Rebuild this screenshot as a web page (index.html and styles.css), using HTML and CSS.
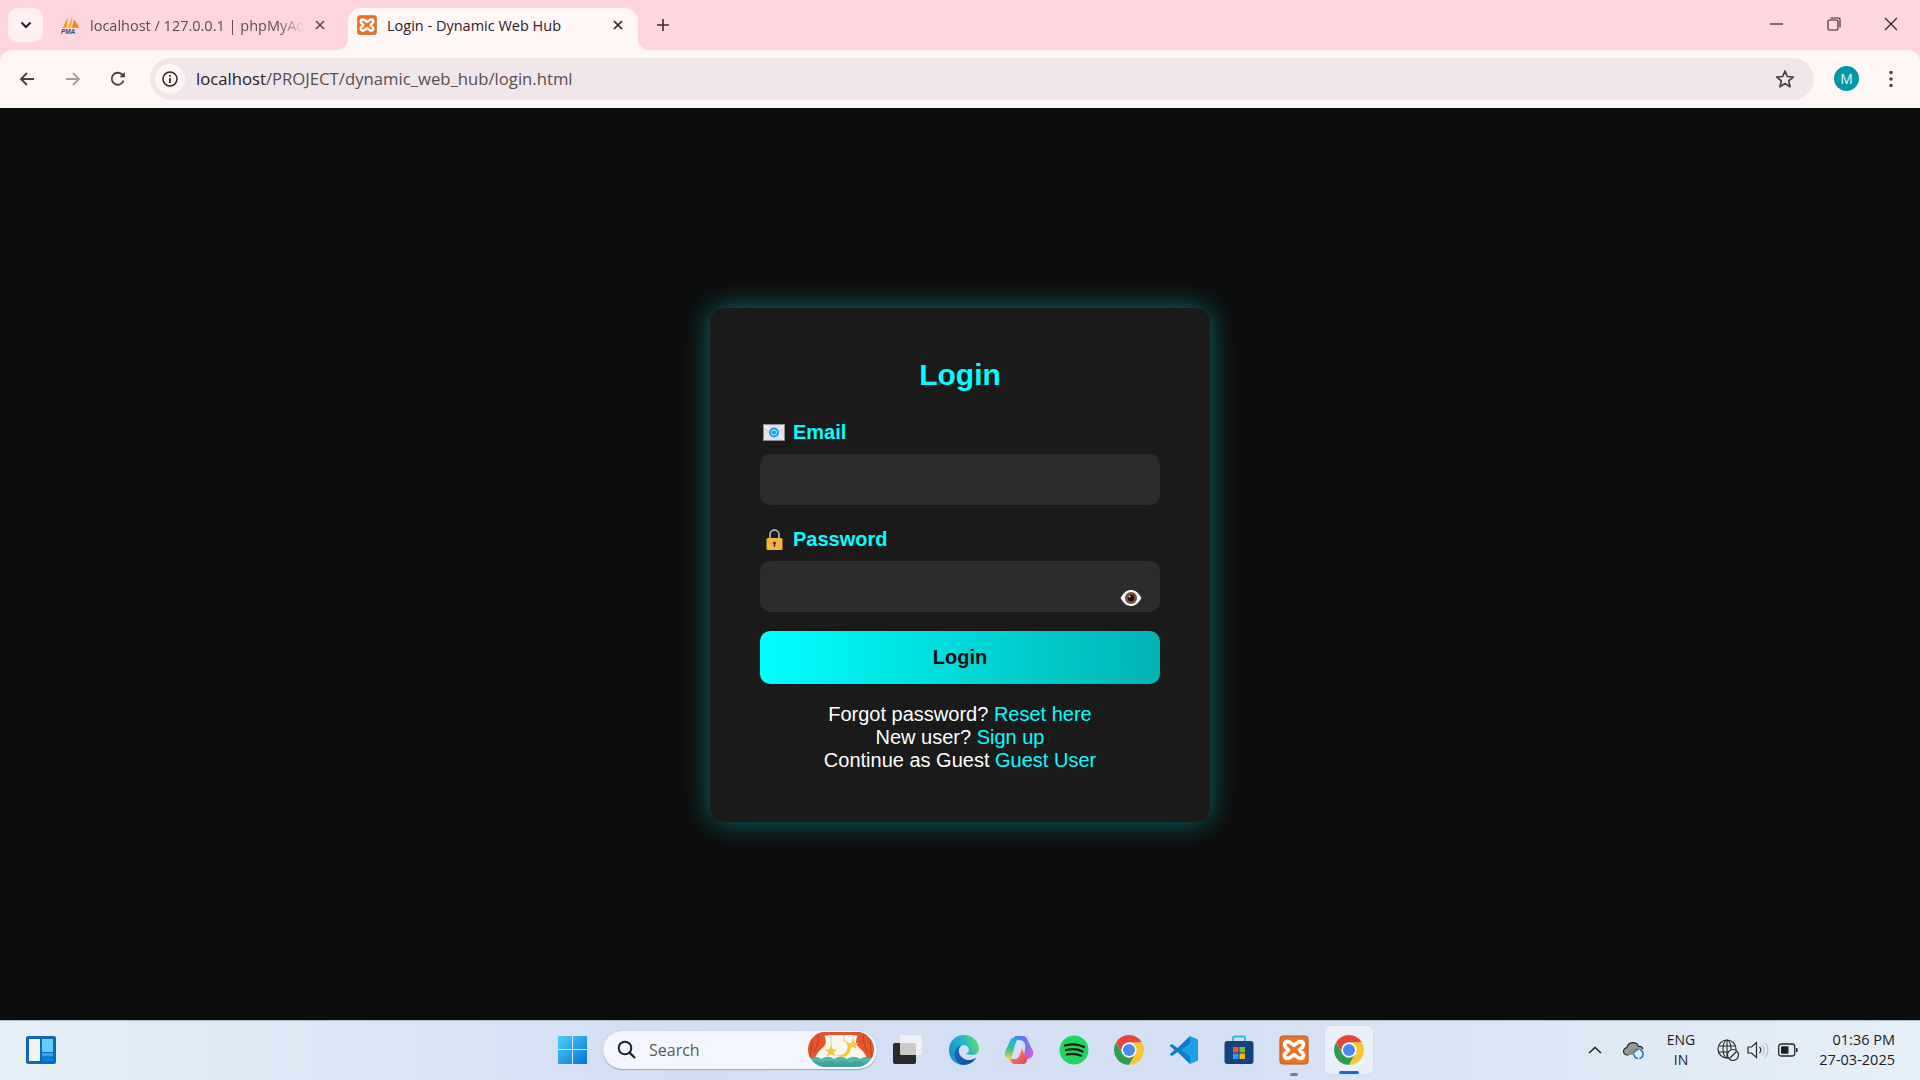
FILE: index.html
```html
<!DOCTYPE html>
<html lang="en">
<head>
    <meta charset="UTF-8">
    <meta name="viewport" content="width=device-width, initial-scale=1.0">
    <title>Login - Dynamic Web Hub</title>
    <link rel="stylesheet" href="styles.css">
</head>
<body>
    <!-- shared icons -->
    <svg class="sprite" aria-hidden="true">
        <symbol id="chrome" viewBox="4 4 40 40">
            <path fill="#e8463a" d="M24 4A20 20 0 0 1 41.32 14H24A10 10 0 0 0 15.34 29L6.68 14A20 20 0 0 1 24 4z"/>
            <path fill="#2f9e52" d="M6.68 14A20 20 0 0 0 24 44L32.66 29A10 10 0 0 1 15.34 29z"/>
            <path fill="#fcc52f" d="M41.32 14H24A10 10 0 0 1 32.66 29L24 44A20 20 0 0 0 41.32 14z"/>
            <circle cx="24" cy="24" r="10" fill="#fff"/>
            <circle cx="24" cy="24" r="8" fill="#4a8af4"/>
        </symbol>
        <symbol id="xampp" viewBox="0 0 32 32">
            <rect x="1" y="1" width="30" height="30" rx="3" fill="#e8742a"/>
            <rect x="1" y="1" width="30" height="30" rx="3" fill="none" stroke="#b9561c"/>
            <path fill="none" stroke="#fff" stroke-width="4" stroke-linejoin="round" d="M9 7C6 7 5 10 7 13L10 16L7 19C5 22 6 25 9 25C12 25 13 23 16 21C19 23 20 25 23 25C26 25 27 22 25 19L22 16L25 13C27 10 26 7 23 7C20 7 19 9 16 11C13 9 12 7 9 7z"/>
        </symbol>
    </svg>

    <div class="tabstrip">
        <button class="tab-search">
            <svg width="12" height="8" viewBox="0 0 12 8"><path d="M1.500 1.500L6 6L10.500 1.500" fill="none" stroke="#2d2024" stroke-width="2"/></svg>
        </button>
        <div class="tab">
            <svg class="favicon" viewBox="0 0 22 20">
                <path fill="#f29a1f" d="M3 13C5 9 7 5 8 1C8.500 5 8 10 7 13z"/>
                <path fill="#f7b23b" d="M8 13C10 9 12 5 13 0C14 5 13 10 12 13z"/>
                <path fill="#e8871a" d="M13 13C14 9 15 7 15 4C18 7 20 10 21 13z"/>
                <text x="1" y="19.500" class="pma">PMA</text>
            </svg>
            <span class="tab-title">localhost / 127.0.0.1 | phpMyAdmin</span>
            <svg class="tab-close" viewBox="0 0 12 12"><path d="M2 2L10 10M10 2L2 10" stroke="#5b4d50" stroke-width="1.700"/></svg>
        </div>
        <div class="tab active">
            <svg class="favicon"><use href="#xampp"/></svg>
            <span class="tab-title">Login - Dynamic Web Hub</span>
            <svg class="tab-close" viewBox="0 0 12 12"><path d="M2 2L10 10M10 2L2 10" stroke="#2d2024" stroke-width="1.700"/></svg>
        </div>
        <svg class="new-tab" viewBox="0 0 14 14"><path d="M7 1V13M1 7H13" stroke="#3a2d30" stroke-width="1.600"/></svg>
        <div class="window-controls">
            <svg width="14" height="14" viewBox="0 0 14 14"><path d="M0 7H13" stroke="#2b2124" stroke-width="1.200"/></svg>
            <svg width="14" height="14" viewBox="0 0 14 14"><rect x="1" y="3" width="10" height="10" rx="1.500" fill="none" stroke="#2b2124" stroke-width="1.100"/><path d="M3.500 1H11.500A1.500 1.500 0 0 1 13 2.500V10.500" fill="none" stroke="#2b2124" stroke-width="1.100"/></svg>
            <svg width="14" height="14" viewBox="0 0 14 14"><path d="M1 1L13 13M13 1L1 13" stroke="#2b2124" stroke-width="1.200"/></svg>
        </div>
    </div>

    <div class="toolbar">
        <svg class="nav-icon" viewBox="0 0 16 16"><path d="M15 8H2M8 2L2 8L8 14" fill="none" stroke="#4a3c3f" stroke-width="1.800"/></svg>
        <svg class="nav-icon nav-forward" viewBox="0 0 16 16"><path d="M1 8H14M8 2L14 8L8 14" fill="none" stroke="#a89c9f" stroke-width="1.800"/></svg>
        <svg class="nav-icon nav-reload" viewBox="0 0 16 16"><path d="M13.500 9.500A6 6 0 1 1 12 3.500L14 5.500" fill="none" stroke="#4a3c3f" stroke-width="1.800"/><path d="M14.800 1V6.300H9.500z" fill="#4a3c3f"/></svg>
        <div class="omnibox">
            <span class="site-info">
                <svg width="16" height="16" viewBox="0 0 16 16"><circle cx="8" cy="8" r="7" fill="none" stroke="#2d2024" stroke-width="1.500"/><path d="M8 7V12M8 4V5.800" stroke="#2d2024" stroke-width="1.700"/></svg>
            </span>
            <span class="url">localhost<span class="url-path">/PROJECT/dynamic_web_hub/login.html</span></span>
            <svg class="star" viewBox="0 0 20 20"><path d="M10 2L12.300 7.500L18.200 8L13.700 11.900L15.100 17.700L10 14.600L4.900 17.700L6.300 11.900L1.800 8L7.700 7.500z" fill="none" stroke="#4a3c3f" stroke-width="1.700" stroke-linejoin="round"/></svg>
        </div>
        <span class="avatar">M</span>
        <svg class="menu-dots" viewBox="0 0 4 18"><circle cx="2" cy="2.500" r="1.800"/><circle cx="2" cy="9" r="1.800"/><circle cx="2" cy="15.500" r="1.800"/></svg>
    </div>

    <main class="page">
        <form class="card">
            <h2 class="card-title">Login</h2>

            <label class="field-label">
                <span class="label-icon">
                    <svg width="22" height="17" viewBox="0 0 22 17">
                        <rect x="0.500" y="0.500" width="21" height="16" fill="#e4deea" stroke="#8f8b99"/>
                        <path d="M1 1L11 8.500L21 1M1 16L8 7M21 16L14 7" fill="none" stroke="#fff" stroke-width="0.800"/>
                        <circle cx="11" cy="8.500" r="5" fill="#16a2e8"/>
                        <circle cx="11" cy="8.500" r="2.600" fill="none" stroke="#bfe8fb" stroke-width="1"/>
                    </svg>
                </span>
                Email
            </label>
            <input class="text-input" type="email">

            <label class="field-label field-label-next">
                <span class="label-icon">
                    <svg width="17" height="21" viewBox="0 0 17 21">
                        <path d="M4 10V5.500A4.500 4.500 0 0 1 13 5.500V10" fill="none" stroke="#a9a9ad" stroke-width="1.800"/>
                        <rect x="0.500" y="9" width="16" height="12" rx="1.500" fill="#f9b233"/>
                        <circle cx="8.500" cy="14" r="1.600" fill="#3a3560"/>
                        <path d="M7.800 14H9.200V18H7.800z" fill="#3a3560"/>
                    </svg>
                </span>
                Password
            </label>
            <div class="password-wrap">
                <input class="text-input" type="password">
                <svg class="eye" viewBox="0 0 22 18">
                    <path d="M0.500 9C4 3 7 1 11 1S18 3 21.500 9C18 15 15 17 11 17S4 15 0.500 9z" fill="#f4f4f4"/>
                    <circle cx="11" cy="9" r="6" fill="#7d4a34"/>
                    <circle cx="11" cy="9" r="3.200" fill="#15110f"/>
                    <circle cx="9.500" cy="7.500" r="1" fill="#eee"/>
                </svg>
            </div>

            <button class="login-btn" type="button">Login</button>

            <div class="links">
                <p>Forgot password? <a href="#">Reset here</a></p>
                <p>New user? <a href="#">Sign up</a></p>
                <p>Continue as Guest <a href="#">Guest User</a></p>
            </div>
        </form>
    </main>

    <footer class="taskbar">
        <svg class="widgets" viewBox="0 0 30 28">
            <rect width="30" height="28" rx="2" fill="#0f67b8"/>
            <rect x="3" y="3" width="11" height="22" fill="#f2f3f5"/>
            <rect x="16" y="3" width="11" height="13" fill="#62d0ff"/>
            <rect x="16" y="17" width="11" height="3.500" fill="#2fa6f2"/>
            <rect x="16" y="21.500" width="11" height="3.500" fill="#0a84e8"/>
        </svg>

        <div class="task-center">
            <span class="task-item task-start">
                <svg class="task-icon" viewBox="0 0 30 30">
                    <defs><linearGradient id="winBlue" x1="0" y1="0" x2="1" y2="1"><stop offset="0" stop-color="#4fd0fb"/><stop offset="1" stop-color="#0672d0"/></linearGradient></defs>
                    <path fill="url(#winBlue)" d="M0 1H14V14H0zM15 1H29V14H15zM0 15H14V29H0zM15 15H29V29H15z"/>
                </svg>
            </span>
            <div class="search-box">
                <svg width="20" height="20" viewBox="0 0 20 20"><circle cx="8" cy="8" r="6.300" fill="none" stroke="#222" stroke-width="2"/><path d="M12.600 12.600L18 18" stroke="#222" stroke-width="2.200"/></svg>
                <span class="search-text">Search</span>
                <svg class="search-art" viewBox="0 0 66 35">
                    <defs><clipPath id="artClip"><rect width="66" height="35" rx="17.500"/></clipPath></defs>
                    <g clip-path="url(#artClip)">
                        <rect width="66" height="35" fill="#fbf7ee"/>
                        <path fill="#52b8ad" d="M0 27C5 24 9 24 13 27C18 24 22 24 26 27C31 24 35 24 39 27C44 24 48 24 52 27C57 24 61 24 66 27V35H0z"/>
                        <path fill="#2f8f8c" d="M0 31C6 28 10 28 14 31C20 28 24 28 28 31C34 28 38 28 42 31C48 28 52 28 56 31C60 29 63 29 66 31V35H0z" opacity="0.500"/>
                        <path fill="#e5552c" d="M0 0H66V3C60 5 52 4 44 3H22C14 4 6 5 0 3z"/>
                        <path fill="#e5552c" d="M0 0H16C17 6 19 10 17 13C14 17 9 20 7 26H0z"/>
                        <path fill="#e5552c" d="M66 0H50C49 6 47 10 49 13C52 17 57 20 59 26H66z"/>
                        <path d="M4 2C4 10 3 18 2 25M10 2C11 8 10 14 6 20M62 2C62 10 63 18 64 25M56 2C55 8 56 14 60 20" fill="none" stroke="#bb3a1d" stroke-width="0.900"/>
                        <path d="M23 3V14M36 3V9M45 3V8" stroke="#c9b89a" stroke-width="0.700"/>
                        <path fill="#f6c538" d="M23 13L24.800 17.500H29L25.700 20.200L27 24.500L23 22L19 24.500L20.300 20.200L17 17.500H21.200zM45 7L46.600 11H50.500L47.400 13.400L48.500 17L45 15L41.500 17L42.600 13.400L39.500 11H43.400z"/>
                        <path fill="#f6c538" d="M35 8A8.500 8.500 0 1 1 28 22.500A7 7 0 0 0 35 8z"/>
                    </g>
                </svg>
            </div>
            <span class="task-item">
                <svg class="task-icon" viewBox="0 0 30 30">
                    <rect x="0" y="8" width="23" height="21" rx="2" fill="#2a2a2a"/>
                    <rect x="7" y="0" width="22" height="20" rx="1.500" fill="#f3f3f3" opacity="0.800"/>
                </svg>
            </span>
            <span class="task-item task-edge">
                <svg class="task-icon" viewBox="0 0 30 30">
                    <defs>
                        <linearGradient id="edgeTop" x1="0" y1="0.700" x2="1" y2="0.300"><stop offset="0" stop-color="#1290d8"/><stop offset="0.550" stop-color="#1fb5c8"/><stop offset="1" stop-color="#62dc6a"/></linearGradient>
                        <linearGradient id="edgeLow" x1="0" y1="0" x2="1" y2="1"><stop offset="0" stop-color="#1670c0"/><stop offset="1" stop-color="#0c4f9c"/></linearGradient>
                    </defs>
                    <path fill="url(#edgeTop)" d="M15 0C23 0 30 6 30 14C30 18 27 20 23 20C20 20 17.500 19 16.500 18.500C19 18 20 16.500 20 15C20 12 17 10 14 10C8 10 5 14 5 19C5 24 8 28 13 30C5 29 0 23 0 15C0 6 7 0 15 0z"/>
                    <path fill="url(#edgeLow)" d="M13 30C8 28 5 24 5 19C5 14 8 10 14 10C11 11 9.500 14 10 17.500C11 22 16 25.500 21 25C24 24.700 26 23.500 27.500 22.500C25 27 20 30 15 30z"/>
                </svg>
            </span>
            <span class="task-item">
                <svg class="task-icon" viewBox="0 0 30 30">
                    <defs>
                        <linearGradient id="copA" x1="0.300" y1="0" x2="0.300" y2="1"><stop offset="0" stop-color="#2aa8e8"/><stop offset="0.550" stop-color="#3ec28a"/><stop offset="1" stop-color="#f7d038"/></linearGradient>
                        <linearGradient id="copB" x1="0" y1="0" x2="1" y2="1"><stop offset="0" stop-color="#3a7df0"/><stop offset="0.600" stop-color="#8a6ef0"/><stop offset="1" stop-color="#e85cc8"/></linearGradient>
                        <linearGradient id="copC" x1="0" y1="0" x2="1" y2="1"><stop offset="0" stop-color="#f7a03a"/><stop offset="1" stop-color="#f0386c"/></linearGradient>
                    </defs>
                    <path fill="url(#copB)" d="M10 2C11 1 12 1 13 1H19C22 1 23 3 24 6L29 16C30 20 28 24 23 24H18C20 20 22 14 21 9C20 6 18 5 15 5H9z"/>
                    <path fill="url(#copC)" d="M20 29H11C8 29 7 27 6 24H11C14 24 15 22 16 19L18 13C19 16 20 19 22 21C24 24 23 28 20 29z"/>
                    <path fill="url(#copA)" d="M9 3H16C13 4 12 7 11 10L7 24C3 24 0 21 1 17L5 8C6 5 7 3 9 3z"/>
                </svg>
            </span>
            <span class="task-item">
                <svg class="task-icon" viewBox="0 0 30 30">
                    <circle cx="15" cy="15" r="14.500" fill="#1ed760"/>
                    <path d="M6 10.500C12 9 19 9 25 12M7 15C12 13.800 18.500 14 23.500 16.500M8 19.500C12 18.500 17.500 18.800 22 20.800" fill="none" stroke="#1a1a1a" stroke-width="2.300" stroke-linecap="round"/>
                </svg>
            </span>
            <span class="task-item"><svg class="task-icon"><use href="#chrome"/></svg></span>
            <span class="task-item">
                <svg class="task-icon" viewBox="0 0 30 30">
                    <path fill="#0a7cc8" d="M21 1L8.500 13L3 9L0.500 10.500L5.500 15L0.500 19.500L3 21L8.500 17L21 29L22 15z"/>
                    <path fill="#1f9fe8" d="M21 1L29 4.500V25.500L21 29zM21 8.500L12 15L21 21.500z"/>
                </svg>
            </span>
            <span class="task-item">
                <svg class="task-icon" viewBox="0 0 30 30">
                    <path d="M9 7V3.500A2 2 0 0 1 11 1.500H19A2 2 0 0 1 21 3.500V7" fill="none" stroke="#2eb6ee" stroke-width="2"/>
                    <rect x="0.500" y="6" width="29" height="23" rx="3" fill="#14427e"/>
                    <rect x="9" y="12" width="5.500" height="5.500" fill="#f05033"/>
                    <rect x="15.500" y="12" width="5.500" height="5.500" fill="#7fbb2a"/>
                    <rect x="9" y="18.500" width="5.500" height="5.500" fill="#18a3ea"/>
                    <rect x="15.500" y="18.500" width="5.500" height="5.500" fill="#fdb912"/>
                </svg>
            </span>
            <span class="task-item task-open"><svg class="task-icon"><use href="#xampp"/></svg></span>
            <span class="task-item task-active"><svg class="task-icon"><use href="#chrome"/></svg></span>
        </div>

        <div class="tray">
            <svg class="tray-chevron" viewBox="0 0 14 8"><path d="M1 7L7 1.500L13 7" fill="none" stroke="#1c1c1c" stroke-width="1.500"/></svg>
            <svg class="tray-cloud" viewBox="0 0 22 20">
                <path d="M6 15H4.500A3.700 3.700 0 0 1 4 7.600A6 6 0 0 1 15.500 6.500A4 4 0 0 1 20 9" fill="#9a9a9a" stroke="#2a2a2a" stroke-width="1.200"/>
                <path d="M5 15C4 12 7 8 13 8C14 8 15 9 15 9L10 15z" fill="#8d8d8d"/>
                <circle cx="15.500" cy="14" r="4.500" fill="#e4eef7" stroke="#1c74c8" stroke-width="1.600" stroke-dasharray="6 1.500"/>
            </svg>
            <div class="tray-lang"><span>ENG</span><span>IN</span></div>
            <svg class="tray-globe" viewBox="0 0 22 22">
                <circle cx="10" cy="10" r="9" fill="none" stroke="#2a2a2a" stroke-width="1.200"/>
                <ellipse cx="10" cy="10" rx="4" ry="9" fill="none" stroke="#2a2a2a" stroke-width="1.100"/>
                <path d="M1.500 7H18.500M1.500 13H12M10 1V19" stroke="#2a2a2a" stroke-width="1.100"/>
                <circle cx="16" cy="16" r="5.500" fill="#e4eef7" stroke="#2a2a2a" stroke-width="1.200"/>
                <path d="M12.500 19.500L19.500 12.500" stroke="#2a2a2a" stroke-width="1.200"/>
            </svg>
            <svg class="tray-sound" viewBox="0 0 22 18">
                <path d="M1 6H4.500L9.500 1.500V16.500L4.500 12H1z" fill="none" stroke="#2a2a2a" stroke-width="1.200"/>
                <path d="M12.500 6A4.500 4.500 0 0 1 12.500 12" fill="none" stroke="#2a2a2a" stroke-width="1.200"/>
                <path d="M15 3.500A8 8 0 0 1 15 14.500M18 1.500A11 11 0 0 1 18 16.500" fill="none" stroke="#b5b9bf" stroke-width="1"/>
            </svg>
            <svg class="tray-battery" viewBox="0 0 20 14">
                <rect x="0.700" y="1" width="16" height="12" rx="2.500" fill="none" stroke="#2a2a2a" stroke-width="1.300"/>
                <rect x="3" y="3.300" width="7.500" height="7.400" rx="1" fill="#1f1f1f"/>
                <path d="M18 5H19.500V9H18z" fill="#1f1f1f"/>
            </svg>
            <div class="tray-clock"><span>01:36 PM</span><span>27-03-2025</span></div>
        </div>
    </footer>
</body>
</html>
```

FILE: styles.css
```css
* {
    box-sizing: border-box;
}

body {
    margin: 0;
    height: 1080px;
    display: flex;
    flex-direction: column;
    overflow: hidden;
    background: #ffd6df;
    font-family: "Open Sans", "Liberation Sans", sans-serif;
    color: #2d2024;
}

.sprite {
    position: absolute;
    width: 0;
    height: 0;
}

/* BROWSER TABS */
.tabstrip {
    height: 50px;
    flex: none;
    display: flex;
    background: #ffd6df;
    position: relative;
}

.tab-search {
    width: 35px;
    height: 34px;
    margin: 8px 0 0 8px;
    padding: 0;
    border: 0;
    border-radius: 10px;
    background: #fff1f3;
    display: flex;
    align-items: center;
    justify-content: center;
}

.tab {
    width: 295px;
    height: 42px;
    margin-top: 8px;
    padding: 0 12px 8px 17px;
    display: flex;
    align-items: center;
    gap: 10px;
    color: #5b4d50;
    font-size: 14.500px;
    position: relative;
}

.tab.active {
    width: 290px;
    margin-left: 10px;
    padding: 0 14px 8px 9px;
    color: #2d2024;
    background: #fff7f5;
    border-radius: 14px 14px 0 0;
}

.tab.active::before,
.tab.active::after {
    content: "";
    position: absolute;
    bottom: 0;
    width: 12px;
    height: 12px;
}

.tab.active::before {
    left: -12px;
    background: radial-gradient(circle at 0 0, transparent 12px, #fff7f5 12.500px);
}

.tab.active::after {
    right: -12px;
    background: radial-gradient(circle at 100% 0, transparent 12px, #fff7f5 12.500px);
}

.favicon {
    width: 20px;
    height: 20px;
    flex: none;
}

.pma {
    font-family: "Liberation Sans", sans-serif;
    font-size: 7px;
    font-weight: bold;
    font-style: italic;
    fill: #2b4a86;
}

.tab-title {
    flex: 1;
    white-space: nowrap;
    overflow: hidden;
    -webkit-mask-image: linear-gradient(90deg, #000 88%, transparent);
    mask-image: linear-gradient(90deg, #000 88%, transparent);
}

.tab.active .tab-title {
    -webkit-mask-image: none;
    mask-image: none;
}

.tab-close {
    width: 12px;
    height: 12px;
    flex: none;
}

.new-tab {
    width: 14px;
    height: 14px;
    margin: 18px 0 0 18px;
}

.window-controls {
    margin-left: auto;
    padding: 17px 22px 0 0;
    display: flex;
    gap: 43px;
    height: 14px;
}

/* TOOLBAR */
.toolbar {
    height: 58px;
    flex: none;
    display: flex;
    align-items: center;
    background: #fff7f5;
    border-radius: 12px 12px 0 0;
    padding-bottom: 1px;
}

.nav-icon {
    width: 16px;
    height: 16px;
    margin-left: 19px;
    flex: none;
}

.nav-forward {
    margin-left: 30px;
}

.nav-reload {
    margin-left: 29px;
}

.omnibox {
    width: 1664px;
    height: 42px;
    margin-left: 24px;
    flex: none;
    display: flex;
    align-items: center;
    border-radius: 21px;
    background: #f1e6ea;
    padding: 0 19px 0 5px;
}

.site-info {
    width: 30px;
    height: 30px;
    border-radius: 50%;
    background: #fff7f5;
    display: flex;
    align-items: center;
    justify-content: center;
    flex: none;
}

.url {
    margin-left: 11px;
    font-size: 16.700px;
    color: #2d2024;
    white-space: nowrap;
}

.url-path {
    color: #5b4d50;
}

.star {
    width: 20px;
    height: 20px;
    margin-left: auto;
}

.avatar {
    width: 25px;
    height: 25px;
    margin-left: 20px;
    border-radius: 50%;
    background: #0097a7;
    color: #e8f6f8;
    font-size: 14px;
    display: flex;
    align-items: center;
    justify-content: center;
    flex: none;
}

.menu-dots {
    width: 4px;
    height: 18px;
    margin-left: 30px;
    fill: #5b3f47;
    flex: none;
}

/* LOGIN CARD */
.page {
    flex: 1;
    display: flex;
    align-items: center;
    justify-content: center;
    padding-top: 2px;
    background: #0d0d0d;
    font-family: "Liberation Sans", Arial, sans-serif;
}

.card {
    width: 500px;
    padding: 50px;
    background: #1a1a1a;
    border-radius: 15px;
    box-shadow: 0 0 28px rgba(0, 255, 255, 0.4);
}

.card-title {
    margin: 0 0 29px;
    font-size: 30px;
    font-weight: bold;
    line-height: 34px;
    text-align: center;
    color: #0ff;
}

.field-label {
    display: flex;
    align-items: center;
    height: 23px;
    margin-bottom: 10px;
    font-size: 20px;
    font-weight: bold;
    color: #0ff;
}

.field-label-next {
    margin-top: 23px;
}

.label-icon {
    width: 28px;
    margin-right: 5px;
    display: flex;
    justify-content: center;
}

.text-input {
    display: block;
    width: 100%;
    height: 51px;
    border: 0;
    border-radius: 10px;
    background: #2c2c2c;
}

.password-wrap {
    position: relative;
}

.eye {
    position: absolute;
    right: 18px;
    top: 28px;
    width: 22px;
    height: 18px;
}

.login-btn {
    display: block;
    width: 100%;
    height: 53px;
    margin-top: 19px;
    border: 0;
    border-radius: 10px;
    background: linear-gradient(90deg, #0ff, #00b3b3);
    color: #111;
    font-family: inherit;
    font-size: 20px;
    font-weight: bold;
}

.links {
    margin-top: 19px;
    font-size: 20px;
    line-height: 23px;
    text-align: center;
    color: #fff;
}

.links p {
    margin: 0;
}

.links a {
    color: #0ff;
    text-decoration: none;
}

/* TASKBAR */
.taskbar {
    height: 60px;
    flex: none;
    display: flex;
    align-items: center;
    padding-bottom: 2px;
    border-top: 1px solid #b4bccb;
    background: linear-gradient(90deg, #e6f0f8, #d3def3 35%, #d6e0f3 65%, #e5f0f8);
    position: relative;
}

.widgets {
    width: 30px;
    height: 28px;
    margin-left: 26px;
    flex: none;
}

.task-center {
    margin-left: 492px;
    display: flex;
    align-items: center;
    gap: 7px;
    flex: none;
}

.task-item {
    width: 48px;
    height: 48px;
    display: flex;
    align-items: center;
    justify-content: center;
    flex: none;
    position: relative;
    border-radius: 5px;
}

.task-start .task-icon {
    margin-left: 2px;
}

.task-edge {
    margin-left: 1px;
}

.task-icon {
    width: 30px;
    height: 30px;
}

.task-open::after,
.task-active::after {
    content: "";
    position: absolute;
    bottom: 0;
    left: 50%;
    transform: translateX(-50%);
    height: 3px;
    border-radius: 2px;
}

.task-open::after {
    width: 8px;
    background: #7b7f88;
    bottom: -2px;
}

.task-active {
    background: #eaf0fa;
    box-shadow: 0 0 1px rgba(0, 0, 0, 0.2);
}

.task-active::after {
    width: 20px;
    background: #0a6fd0;
}

.search-box {
    width: 274px;
    height: 38px;
    padding-left: 14px;
    display: flex;
    align-items: center;
    border-radius: 19px;
    background: #f3f6fe;
    box-shadow: 0 1px 1px rgba(60, 70, 100, 0.35), 0 0 1px rgba(60, 70, 100, 0.3);
    position: relative;
    flex: none;
}

.search-text {
    margin-left: 12px;
    font-size: 16px;
    color: #5a5a5a;
}

.search-art {
    position: absolute;
    right: 3px;
    top: 1px;
    width: 66px;
    height: 35px;
}

.tray {
    margin-left: auto;
    padding-right: 25px;
    display: flex;
    align-items: center;
    color: #1c1c1c;
    font-size: 14px;
    flex: none;
}

.tray-chevron {
    width: 14px;
    height: 8px;
}

.tray-cloud {
    width: 22px;
    height: 20px;
    margin-left: 21px;
}

.tray-lang {
    width: 34px;
    margin-left: 19px;
    display: flex;
    flex-direction: column;
    align-items: center;
    line-height: 20px;
}

.tray-globe {
    width: 22px;
    height: 22px;
    margin-left: 19px;
}

.tray-sound {
    width: 22px;
    height: 18px;
    margin-left: 8px;
}

.tray-battery {
    width: 20px;
    height: 14px;
    margin-left: 9px;
}

.tray-clock {
    width: 76px;
    margin-left: 21px;
    display: flex;
    flex-direction: column;
    align-items: flex-end;
    font-size: 14.500px;
    line-height: 20px;
    white-space: nowrap;
}
```
